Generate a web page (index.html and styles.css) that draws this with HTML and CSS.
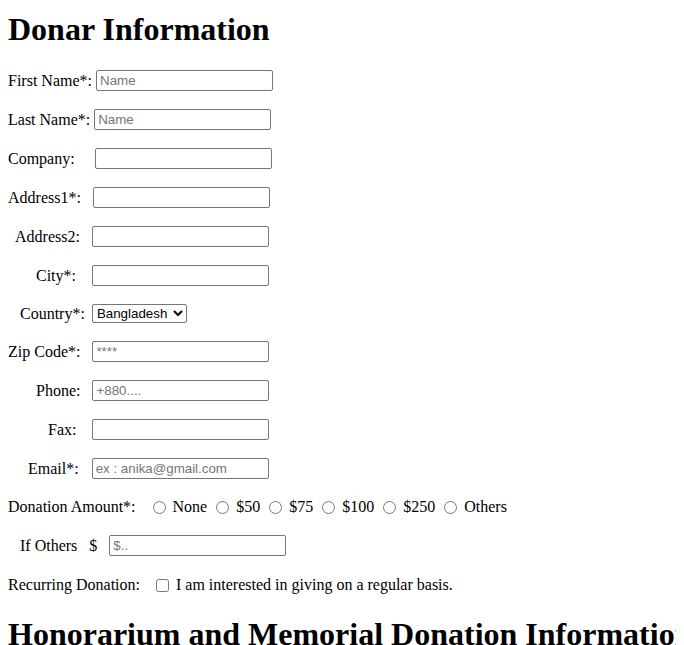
FILE: index.html
```html
<!DOCTYPE html>
<html lang="en">
<head>
<meta charset="utf-8">
<title>Donation Form</title>
<link rel="stylesheet" href="styles.css">
</head>
<body>
<form class="donation-form">
  <h1 class="section-title">Donar Information</h1>

  <div class="row"><span class="lbl gap-4">First Name*:</span><input class="field" type="text" placeholder="Name"></div>
  <div class="row"><span class="lbl gap-4">Last Name*:</span><input class="field" type="text" placeholder="Name"></div>
  <div class="row"><span class="lbl gap-20">Company:</span><input class="field" type="text"></div>
  <div class="row"><span class="lbl gap-12">Address1*:</span><input class="field" type="text"></div>
  <div class="row"><span class="lbl in-7 gap-12">Address2:</span><input class="field" type="text"></div>
  <div class="row"><span class="lbl in-28 gap-16">City*:</span><input class="field" type="text"></div>
  <div class="row row-select"><span class="lbl in-12 gap-7">Country*:</span><select class="select"><option>Bangladesh</option><option>India</option><option>Nepal</option></select></div>
  <div class="row"><span class="lbl gap-12">Zip Code*:</span><input class="field" type="text" placeholder="****"></div>
  <div class="row"><span class="lbl in-28 gap-12">Phone:</span><input class="field" type="text" placeholder="+880...."></div>
  <div class="row"><span class="lbl in-40 gap-16">Fax:</span><input class="field" type="text"></div>
  <div class="row"><span class="lbl in-20 gap-13">Email*:</span><input class="field field-email" type="text" placeholder="ex : anika@gmail.com"></div>

  <div class="row row-amount"><span class="lbl gap-12">Donation Amount*:</span><input class="radio" type="radio" name="amt"> None <input class="radio" type="radio" name="amt"> $50 <input class="radio" type="radio" name="amt"> $75 <input class="radio" type="radio" name="amt"> $100 <input class="radio" type="radio" name="amt"> $250 <input class="radio" type="radio" name="amt"> Others</div>

  <div class="row"><span class="lbl in-12 gap-12">If Others</span><span class="lbl gap-12">$</span><input class="field" type="text" placeholder="$.."></div>

  <div class="row row-recurring"><span class="lbl gap-12">Recurring Donation:</span><input class="check" type="checkbox"> I am interested in giving on a regular basis.</div>

  <h1 class="section-title section-title-2">Honorarium and Memorial Donation Information</h1>
</form>
</body>
</html>
```
FILE: styles.css
```css
html {
  overflow: hidden;
}
body {
  margin: 8px;
  font-family: "Liberation Serif", "Times New Roman", serif;
  font-size: 16px;
  color: #000;
  background: #fff;
}
.donation-form {
  margin: 0;
}
.section-title {
  font-size: 32px;
  font-weight: bold;
  margin: 3px 0 21px;
  white-space: nowrap;
}
.section-title-2 {
  margin-top: 19px;
}
.row {
  margin: 16px 0;
  height: 23px;
  display: flex;
  align-items: center;
  white-space: pre;
}
.row-select {
  height: 21px;
}
.row-amount {
  height: 22px;
}
.row-recurring {
  height: 24px;
}
.lbl {
  display: inline-block;
}
.in-7 { padding-left: 7px; }
.in-12 { padding-left: 12px; }
.in-20 { padding-left: 20px; }
.in-28 { padding-left: 28px; }
.in-40 { padding-left: 40px; }
.gap-4 { margin-right: 4px; }
.gap-7 { margin-right: 7px; }
.gap-12 { margin-right: 12px; }
.gap-13 { margin-right: 13px; }
.gap-16 { margin-right: 16px; }
.gap-20 { margin-right: 20px; }
.field {
  box-sizing: border-box;
  width: 177px;
  height: 21px;
  margin: 0;
  padding: 1px 3px;
  border: 1px solid #767676;
  border-radius: 2px;
  font-family: "Liberation Sans", Arial, sans-serif;
  font-size: 13.333px;
  color: #000;
  background: #fff;
}
.field::placeholder {
  color: #757575;
}
.select {
  box-sizing: border-box;
  width: 95px;
  height: 19px;
  margin: 0;
  font-family: "Liberation Sans", Arial, sans-serif;
  font-size: 13.333px;
  color: #000;
  border: 1px solid #767676;
  border-radius: 2px;
  background: #fff;
}
.radio {
  width: 13px;
  height: 13px;
  margin: 0 3px 0 5px;
}
.check {
  width: 13px;
  height: 13px;
  margin: 0 3px 0 4px;
}
```
